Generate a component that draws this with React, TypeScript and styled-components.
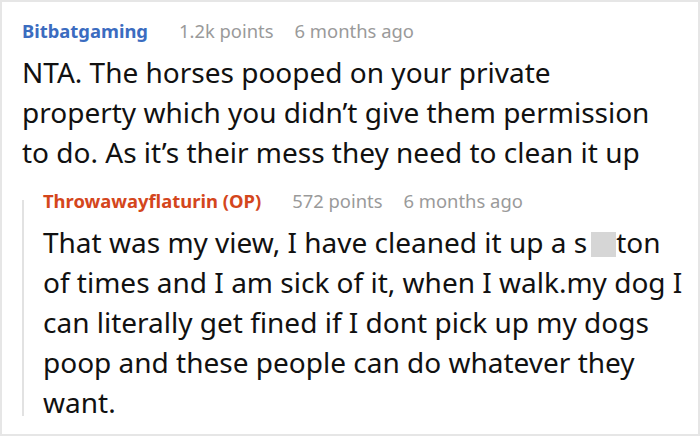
import styled, { createGlobalStyle } from 'styled-components';

const GlobalStyle = createGlobalStyle`
  html, body {
    margin: 0;
    padding: 0;
    background: #ffffff;
  }
  body {
    font-family: "Noto Sans", "Open Sans", sans-serif;
  }
`;

const Frame = styled.div`
  width: 700px;
  height: 436px;
  box-sizing: border-box;
  border: 2px solid #e6e6e6;
  padding: 17px 15px 0 20px;
  overflow: hidden;
`;

const Comment = styled.div`
  display: flex;
  flex-direction: column;
  gap: 9px;
`;

const Meta = styled.div`
  display: flex;
  align-items: baseline;
  gap: 21px;
  font-size: 18.4px;
  line-height: 24px;
`;

const Author = styled.span<{ $op?: boolean }>`
  font-weight: 700;
  color: ${p => (p.$op ? '#d4461c' : '#3b6cc0')};
  margin-right: 10px;
`;

const Stat = styled.span`
  color: #9a9a9a;
`;

const Body = styled.p<{ $inset?: number }>`
  margin: 0;
  padding-right: ${p => p.$inset ?? 0}px;
  font-size: 28px;
  line-height: 40px;
  color: #111111;
`;

const Replies = styled.div`
  position: relative;
  margin-top: 17px;
  padding-left: 21px;

  &::before {
    content: "";
    position: absolute;
    left: 0;
    top: 11px;
    bottom: 6px;
    width: 2px;
    background: #e2e2e2;
  }
`;

const Censored = styled.span`
  white-space: nowrap;
`;

const Redacted = styled.span`
  display: inline-block;
  width: 25px;
  height: 25px;
  margin-left: 4px;
  background: #d6d6d6;
  vertical-align: -4px;
`;

export default function App() {
  return (
    <>
      <GlobalStyle />
      <Frame>
        <Comment>
          <Meta>
            <Author>Bitbatgaming</Author>
            <Stat>1.2k points</Stat>
            <Stat>6 months ago</Stat>
          </Meta>
          <Body $inset={23}>
            NTA. The horses pooped on your private property which you didn’t give them permission to do. As it’s their mess they need to clean it up
          </Body>
        </Comment>
        <Replies>
          <Comment>
            <Meta>
              <Author $op>Throwawayflaturin (OP)</Author>
              <Stat>572 points</Stat>
              <Stat>6 months ago</Stat>
            </Meta>
            <Body>
              That was my view, I have cleaned it up a <Censored>s<Redacted />ton</Censored> of times and I am sick of it, when I walk.my dog I can literally get fined if I dont pick up my dogs poop and these people can do whatever they want.
            </Body>
          </Comment>
        </Replies>
      </Frame>
    </>
  );
}
